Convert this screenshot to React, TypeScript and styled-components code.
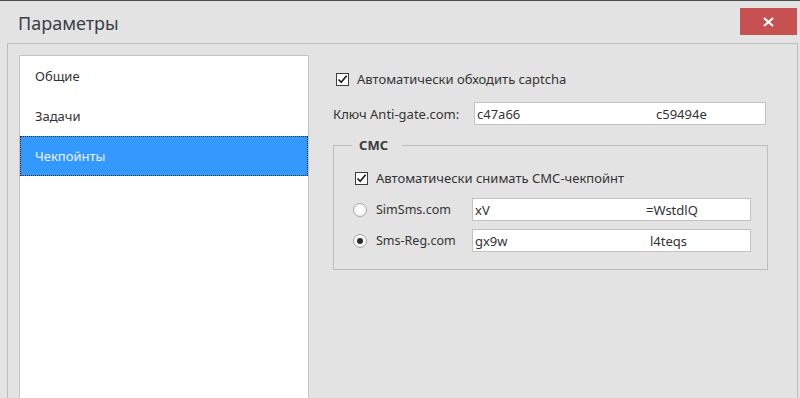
import React from "react";
import styled, { createGlobalStyle } from "styled-components";

const Global = createGlobalStyle`
  html, body { margin: 0; padding: 0; }
  body {
    width: 800px;
    height: 398px;
    overflow: hidden;
    background: #e3e3e3;
    font-family: "Noto Sans", "Open Sans", "Liberation Sans", sans-serif;
    color: #333;
  }
`;

const Window = styled.div`
  width: 800px;
  height: 398px;
  display: flex;
  flex-direction: column;
  background: #e3e3e3;
  border-top: 1px solid #4d4d4d;
  box-sizing: border-box;
  overflow: hidden;
`;

const TitleBar = styled.div`
  height: 42px;
  display: flex;
  align-items: flex-start;
  justify-content: space-between;
  padding: 0 3px 0 18px;
  flex-shrink: 0;
`;

const Title = styled.div`
  font-size: 18px;
  line-height: 20px;
  margin-top: 12px;
  color: #3a3f45;
`;

const CloseButton = styled.div`
  width: 57px;
  height: 27px;
  margin-top: 7px;
  background: #c75050;
  display: flex;
  align-items: center;
  justify-content: center;
`;

const Panel = styled.div`
  flex: 1;
  margin: 0 2px 0 7px;
  border: 1px solid #bcbcbc;
  border-bottom: none;
  display: flex;
  padding: 11px 0 0 11px;
  min-height: 0;
`;

const List = styled.div`
  width: 288px;
  background: #fff;
  border: 1px solid #c4c4c4;
  border-bottom: none;
  display: flex;
  flex-direction: column;
  flex-shrink: 0;
`;

const ListItem = styled.div<{ $selected?: boolean }>`
  height: 40px;
  display: flex;
  align-items: center;
  padding-left: 14px;
  font-size: 13px;
  box-sizing: border-box;
  color: ${(p) => (p.$selected ? "#eef5ff" : "#333")};
  background: ${(p) => (p.$selected ? "#3399ff" : "transparent")};
  border: 1px dotted ${(p) => (p.$selected ? "#3a2a10" : "transparent")};
`;

const RightPane = styled.div`
  margin-left: 24px;
  width: 435px;
  display: flex;
  flex-direction: column;
  padding-top: 14px;
`;

const CheckRow = styled.label<{ $indent: number; $top?: number }>`
  display: flex;
  align-items: center;
  height: 20px;
  gap: 8px;
  padding-left: ${(p) => p.$indent}px;
  margin-top: ${(p) => p.$top ?? 0}px;
  font-size: 13px;
`;

const CheckBox = styled.span`
  width: 13px;
  height: 13px;
  box-sizing: border-box;
  border: 1px solid #3c3c3c;
  background: #fff;
  display: flex;
  align-items: center;
  justify-content: center;
  flex-shrink: 0;
`;

const KeyRow = styled.div`
  display: flex;
  align-items: center;
  margin-top: 13px;
  font-size: 13px;
`;

const KeyLabel = styled.span`
  width: 141px;
  flex-shrink: 0;
`;

const TextBox = styled.div<{ $width: number }>`
  width: ${(p) => p.$width}px;
  height: 23px;
  box-sizing: border-box;
  border: 1px solid #c2c2c2;
  background: #fff;
  display: flex;
  align-items: center;
  padding-left: 2px;
  font-size: 13px;
  color: #333;
  white-space: nowrap;
  overflow: hidden;
`;

const Head = styled.span<{ $width: number }>`
  width: ${(p) => p.$width}px;
  flex-shrink: 0;
`;

const Group = styled.fieldset`
  margin: 11px 0 0 0;
  padding: 0 16px 17px 19px;
  border: 1px solid #bdbdbd;
  min-width: 0;
  width: 435px;
  box-sizing: border-box;
  display: flex;
  flex-direction: column;
`;

const Legend = styled.legend`
  margin-left: -1px;
  padding: 0 14px 0 7px;
  font-size: 13px;
  font-weight: bold;
  line-height: 18px;
  color: #3a3a3a;
`;

const RadioGrid = styled.div`
  display: grid;
  grid-template-columns: 119px 1fr;
  row-gap: 8px;
  margin-top: 10px;
  align-items: center;
`;

const RadioLabel = styled.label`
  display: flex;
  align-items: center;
  gap: 9px;
  font-size: 12.5px;
`;

const Radio = styled.span<{ $checked?: boolean }>`
  width: 14px;
  height: 14px;
  border-radius: 50%;
  box-sizing: border-box;
  border: 1px solid #a9a9a9;
  background: radial-gradient(circle at 50% 40%, #ffffff 0%, #f4f4f4 70%, #e6e6e6 100%);
  display: flex;
  align-items: center;
  justify-content: center;
  flex-shrink: 0;
  &::after {
    content: "";
    width: 6px;
    height: 6px;
    border-radius: 50%;
    background: ${(p) => (p.$checked ? "#2b2b2b" : "transparent")};
  }
`;

const Check = () => (
  <CheckBox>
    <svg width="11" height="11" viewBox="0 0 11 11">
      <path d="M1.5 5.5 L4.2 8.3 L9.6 1.8" fill="none" stroke="#1e1e1e" strokeWidth="1.7" />
    </svg>
  </CheckBox>
);

export default function App() {
  return (
    <>
      <Global />
      <Window>
        <TitleBar>
          <Title>Параметры</Title>
          <CloseButton>
            <svg width="11" height="10" viewBox="0 0 11 10">
              <path d="M1 1 L10 9 M10 1 L1 9" stroke="#fff" strokeWidth="2.2" />
            </svg>
          </CloseButton>
        </TitleBar>
        <Panel>
          <List>
            <ListItem>Общие</ListItem>
            <ListItem>Задачи</ListItem>
            <ListItem $selected>Чекпойнты</ListItem>
          </List>
          <RightPane>
            <CheckRow $indent={3}>
              <Check />
              Автоматически обходить captcha
            </CheckRow>
            <KeyRow>
              <KeyLabel>Ключ Anti-gate.com:</KeyLabel>
              <TextBox $width={292}>
                <Head $width={179}>c47a66</Head>
                <span>c59494e</span>
              </TextBox>
            </KeyRow>
            <Group>
              <Legend>СМС</Legend>
              <CheckRow $indent={2} $top={14}>
                <Check />
                Автоматически снимать СМС-чекпойнт
              </CheckRow>
              <RadioGrid>
                <RadioLabel>
                  <Radio />
                  SimSms.com
                </RadioLabel>
                <TextBox $width={279}>
                  <Head $width={171}>xV</Head>
                  <span>=WstdlQ</span>
                </TextBox>
                <RadioLabel>
                  <Radio $checked />
                  Sms-Reg.com
                </RadioLabel>
                <TextBox $width={279}>
                  <Head $width={175}>gx9w</Head>
                  <span>l4teqs</span>
                </TextBox>
              </RadioGrid>
            </Group>
          </RightPane>
        </Panel>
      </Window>
    </>
  );
}
